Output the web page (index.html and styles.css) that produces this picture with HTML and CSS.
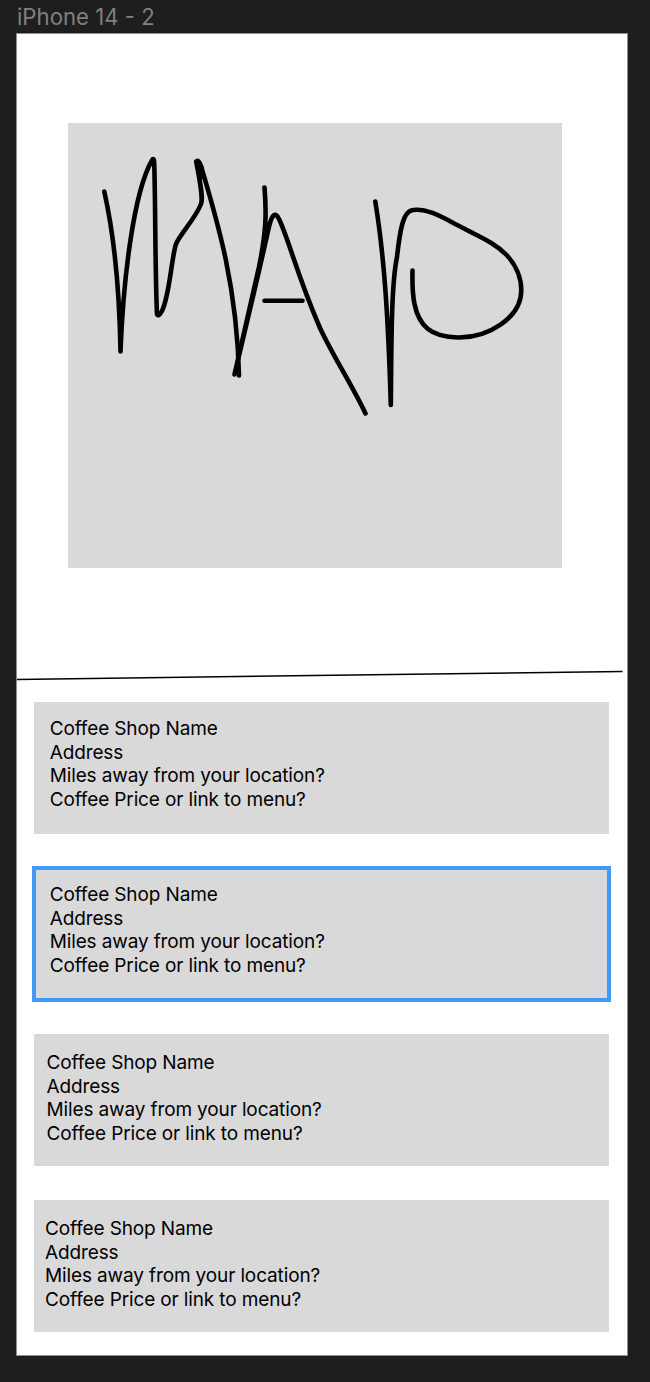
FILE: index.html
```html
<!DOCTYPE html>
<html lang="en">
<head>
<meta charset="utf-8">
<title>iPhone 14 - 2</title>
<link rel="stylesheet" href="styles.css">
</head>
<body>
<div class="frame-label">iPhone 14 - 2</div>
<main class="frame">
  <section class="map">
    <svg class="sketch" viewBox="68 123 494 445" role="img" aria-label="Map">
      <path d="M104.300 191.500C114 235 119.500 290 120.500 351.500C123 284 133 192 152.500 159.500Q154 158 154.200 163C155.500 200 155 270 157 314Q158.500 317.500 162 311C170 294 171 260 176 244C181 233 195 219 201 204C203.500 198 200 182 196.200 161.500Q198.500 159 201 166C217 220 237 285 239 375.500"/>
      <path d="M197 162L200.500 178L201.500 168"/>
      <path d="M264.500 187.500C266.500 212 266.500 230 259 267L234.500 374.500C247 322 260 268 268 231C271 217 274.500 209.500 279 219C289 240 297 275 320 328C333 356 352 385 365.500 413.500"/>
      <path d="M264.500 300.700H302.500"/>
      <path d="M375.300 201.500C384 255 388 312 390.800 405C391.500 345 391 286 397 257C400 230 403 211 413 210C429 208 445 219 463 228C480 237 495 243 506.600 255C515 264 521.300 277 521.300 290C521.300 318 488 338 458 337.500C444 337 434 334 428 329C413 317 412 293 412.500 270.500"/>
    </svg>
  </section>
  <svg class="divider" viewBox="0 0 610 12" aria-hidden="true"><path d="M0 9.500L605.500 1.500"/></svg>
  <section class="shops">
    <article class="card"><p>Coffee Shop Name</p><p>Address</p><p>Miles away from your location?</p><p>Coffee Price or link to menu?</p></article>
    <article class="card selected"><p>Coffee Shop Name</p><p>Address</p><p>Miles away from your location?</p><p>Coffee Price or link to menu?</p></article>
    <article class="card third"><p>Coffee Shop Name</p><p>Address</p><p>Miles away from your location?</p><p>Coffee Price or link to menu?</p></article>
    <article class="card fourth"><p>Coffee Shop Name</p><p>Address</p><p>Miles away from your location?</p><p>Coffee Price or link to menu?</p></article>
  </section>
</main>
</body>
</html>
```

FILE: styles.css
```css
* { box-sizing: border-box; }
body {
  margin: 0;
  height: 1382px;
  padding-left: 16px;
  overflow: hidden;
  background: #1e1e1e;
  font-family: Inter, sans-serif;
}
.frame-label {
  height: 33px;
  padding: 3px 0 0 1px;
  color: #808080;
  font-size: 22.200px;
  line-height: 28px;
}
.frame {
  display: flex;
  flex-direction: column;
  width: 612px;
  height: 1323px;
  border: 1px solid #8e8e8e;
  background: #fff;
}
.map {
  width: 494px;
  height: 445px;
  margin: 89px 0 0 51px;
  background: #d9d9d9;
}
.sketch { display: block; width: 100%; height: 100%; }
.sketch path {
  fill: none;
  stroke: #000;
  stroke-width: 4.600;
  stroke-linecap: round;
  stroke-linejoin: round;
}
.divider { display: block; width: 610px; height: 12px; margin-top: 102px; }
.divider path { fill: none; stroke: #000; stroke-width: 1.500; }
.shops {
  display: flex;
  flex-direction: column;
  gap: 34px;
  padding: 20px 18px 0 17px;
}
.card {
  height: 132px;
  padding: 15.200px 16px 0 15.700px;
  background: #d9d9d9;
  color: #000;
  font-size: 19px;
  line-height: 23.500px;
  letter-spacing: -0.130px;
}
.card p { margin: 0; }
.card.selected { outline: 4px solid #4299f7; outline-offset: -2px; }
.card.third { padding-top: 17px; padding-left: 12.500px; }
.card.fourth { padding-top: 17px; padding-left: 11px; }
```
